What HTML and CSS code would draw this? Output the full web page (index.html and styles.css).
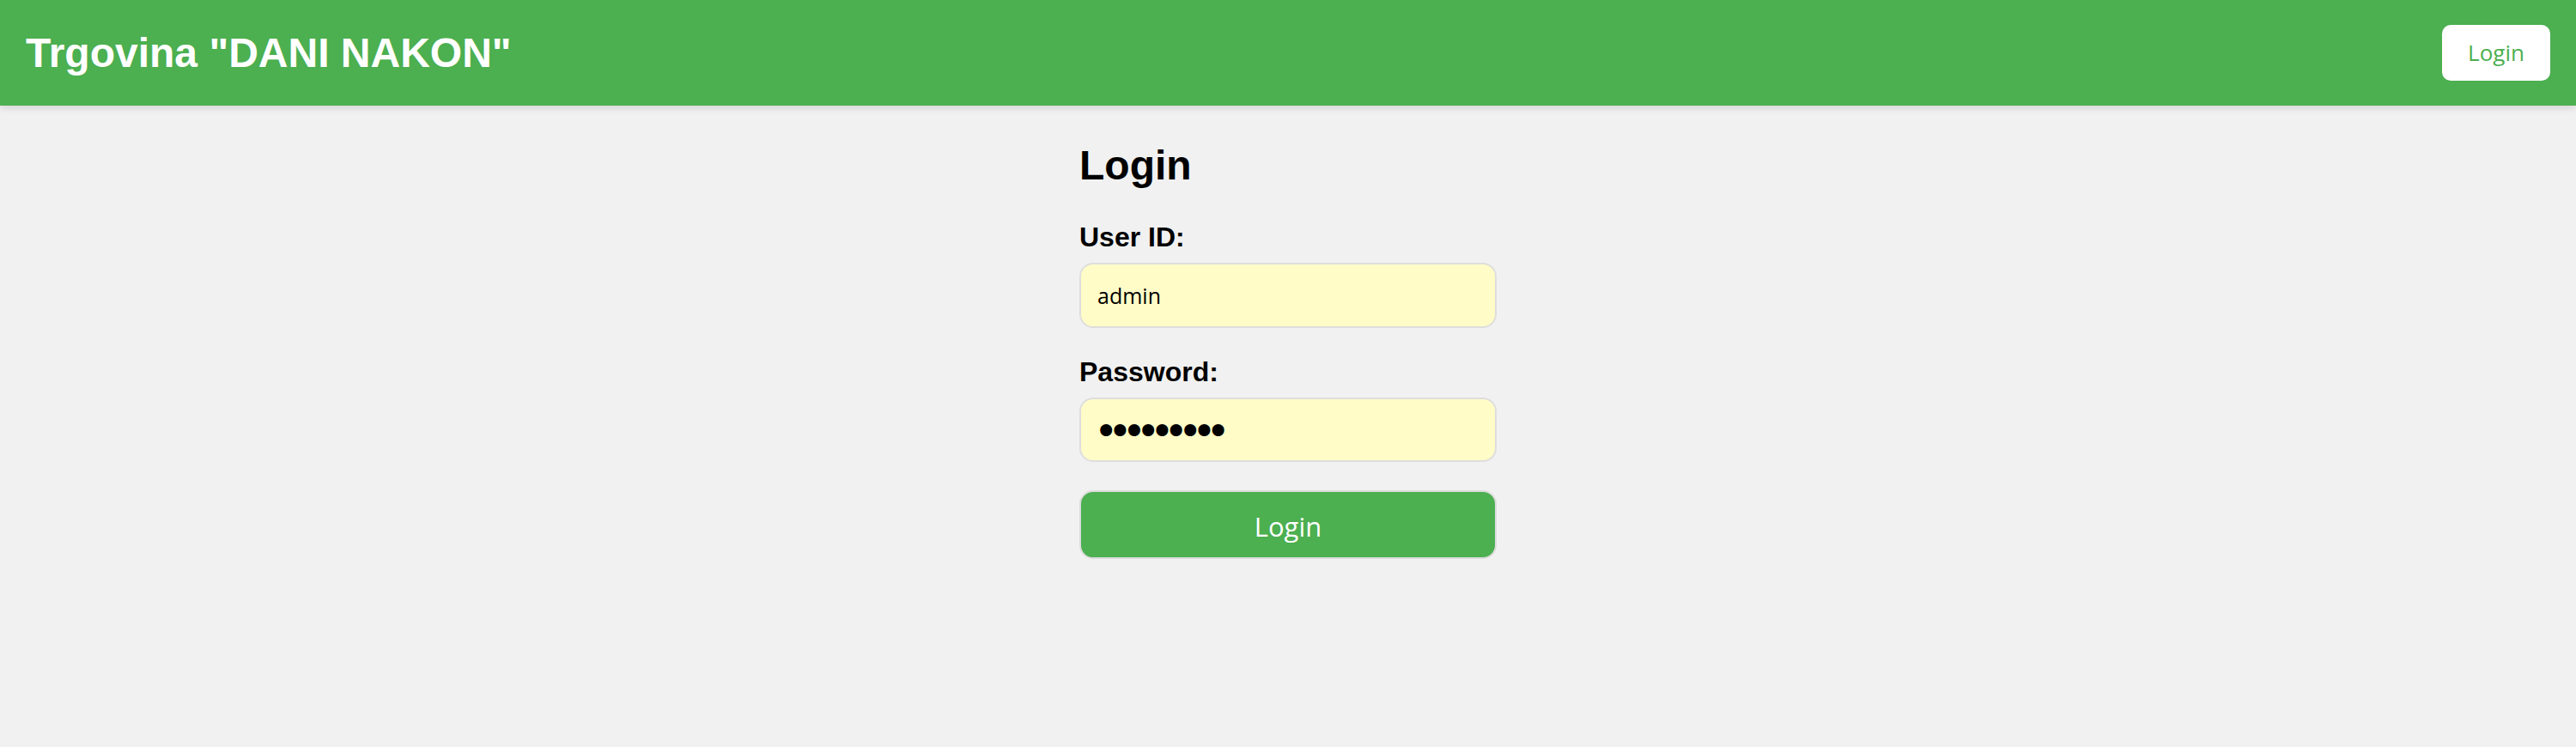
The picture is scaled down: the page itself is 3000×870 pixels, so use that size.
FILE: index.html
```html
<!DOCTYPE html>
<html lang="hr">
<head>
<meta charset="utf-8">
<title>Trgovina "DANI NAKON" - Login</title>
<link rel="stylesheet" href="styles.css">
</head>
<body>
<header class="topbar">
  <h1 class="brand">Trgovina "DANI NAKON"</h1>
  <button class="nav-login" type="button">Login</button>
</header>
<main class="page">
  <form class="login-form" onsubmit="return false">
    <h2 class="form-title">Login</h2>
    <label class="field-label" for="userid">User ID:</label>
    <input class="field-input" id="userid" type="text" value="admin">
    <label class="field-label" for="password">Password:</label>
    <input class="field-input field-password" id="password" type="password" value="123456789">
    <button class="submit-btn" type="submit">Login</button>
  </form>
</main>
</body>
</html>
```

FILE: styles.css
```css
* {
  box-sizing: border-box;
}

html, body {
  margin: 0;
  padding: 0;
}

body {
  background: #f1f1f1;
  font-family: "Liberation Sans", Arial, sans-serif;
  color: #000;
  min-height: 870px;
}

.topbar {
  height: 123px;
  background: #4caf50;
  display: flex;
  align-items: center;
  justify-content: space-between;
  padding: 0 30px;
  box-shadow: 0 3px 8px rgba(0, 0, 0, 0.12);
}

.brand {
  margin: 0;
  font-family: "Liberation Sans", Arial, sans-serif;
  font-weight: bold;
  font-size: 48px;
  line-height: 55px;
  color: #fff;
}

.nav-login {
  width: 126px;
  height: 65px;
  margin-top: -1px;
  border: none;
  border-radius: 10px;
  background: #fff;
  color: #4caf50;
  font-family: "Open Sans", "Noto Sans", sans-serif;
  font-size: 26px;
  padding: 0;
  cursor: pointer;
}

.page {
  display: flex;
  justify-content: center;
}

.login-form {
  width: 486px;
  display: flex;
  flex-direction: column;
  padding-top: 42px;
}

.form-title {
  margin: 0 0 38px;
  font-family: "Liberation Sans", Arial, sans-serif;
  font-weight: bold;
  font-size: 48px;
  line-height: 55px;
}

.field-label {
  font-weight: bold;
  font-size: 32px;
  line-height: 37px;
  margin-bottom: 11px;
}

.field-input {
  height: 76px;
  border: 2px solid #dedede;
  border-radius: 16px;
  background: #fffcc7;
  padding: 0 19px;
  font-family: "Open Sans", "Noto Sans", sans-serif;
  font-size: 25px;
  color: #000;
  margin-bottom: 33px;
  outline: none;
}

.field-password {
  height: 75px;
  padding: 3px 19px 0 15px;
  font-family: "DejaVu Sans", sans-serif;
  font-size: 48px;
  letter-spacing: -12px;
}

.submit-btn {
  height: 80px;
  border: 2px solid #dcdcdc;
  border-radius: 16px;
  background: #4caf50;
  color: #fff;
  font-family: "Open Sans", "Noto Sans", sans-serif;
  font-size: 31px;
  padding: 3px 0 0;
  cursor: pointer;
}
```
